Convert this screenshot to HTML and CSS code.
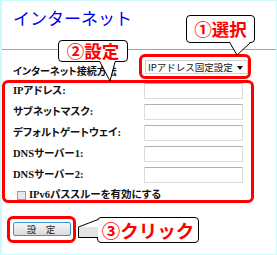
FILE: index.html
```html
<!DOCTYPE html>
<html lang="ja">
<head>
<meta charset="utf-8">
<link rel="stylesheet" href="styles.css">
</head>
<body>
<div class="frame">
  <h1 class="title">インターネット</h1>
  <div class="rule"></div>
  <div class="method-row">
    <span class="method-label">インターネット接続方法</span>
    <span class="hl-select">
      <span class="select">IPアドレス固定設定<span class="arrow"></span></span>
    </span>
  </div>
  <div class="main-box">
    <div class="field"><span class="label">IPアドレス:</span><span class="input"></span></div>
    <div class="field"><span class="label">サブネットマスク:</span><span class="input"></span></div>
    <div class="field"><span class="label">デフォルトゲートウェイ:</span><span class="input"></span></div>
    <div class="field"><span class="label">DNSサーバー1:</span><span class="input"></span></div>
    <div class="field"><span class="label">DNSサーバー2:</span><span class="input"></span></div>
    <div class="check-row"><span class="checkbox"></span><span class="label">IPv6パススルーを有効にする</span></div>
  </div>
  <div class="btn-wrap"><span class="button">設　定</span></div>

  <div class="callout c1">①選択</div>
  <svg class="tail t1" width="26" height="16" viewBox="0 0 26 16"><polygon points="2,0 22,0 9,13" fill="#fff"/><polyline points="2,1 9,13 22,1" fill="none" stroke="#000" stroke-width="1"/></svg>
  <div class="callout c2">②設定</div>
  <svg class="tail t2" width="20" height="22" viewBox="0 0 20 22"><polygon points="2,0 17,0 12,20" fill="#fff"/><polyline points="2,1 12,20 17,1" fill="none" stroke="#000" stroke-width="1"/></svg>
  <div class="callout c3">③クリック</div>
  <svg class="tail t3" width="24" height="24" viewBox="0 0 24 24"><polygon points="22,2 2,10 2,21 22,21" fill="#e4e4e4"/><polygon points="22,2 2,10 22,10" fill="#fff"/><polyline points="22,2.5 2.5,10 2.5,20.5 22,20.5" fill="none" stroke="#000" stroke-width="1"/></svg>
</div>
</body>
</html>
```

FILE: styles.css
```css
* { box-sizing: border-box; }
html, body { margin: 0; padding: 0; background: #fff; }
.frame {
  position: relative;
  width: 277px;
  height: 255px;
  border: 1px solid #cdfafa;
  border-left-width: 2px;
  background: #fff;
  overflow: hidden;
  font-family: "Liberation Serif", "Noto Sans CJK JP", serif;
}
.title {
  margin: 0;
  padding: 7px 0 0 11px;
  height: 27px;
  font-family: "Noto Sans CJK JP", sans-serif;
  font-weight: normal;
  font-size: 17px;
  line-height: 20px;
  color: #0000f0;
}
.rule {
  margin-top: 21px;
  height: 1px;
  background: #a4a4a4;
}
.method-row {
  display: flex;
  align-items: flex-start;
  margin-top: 4px;
  height: 25px;
}
.method-label {
  margin: 11px 0 0 11px;
  width: 126px;
  font-family: "Noto Sans CJK JP", sans-serif;
  font-weight: bold;
  font-size: 10px;
  line-height: 12px;
  font-feature-settings: "palt";
  color: #111;
}
.hl-select {
  display: block;
  border: 3px solid #f00;
  border-radius: 6px;
  padding: 3px 0 2px 3px;
  width: 112px;
  height: 25px;
}
.select {
  display: flex;
  align-items: center;
  position: relative;
  height: 14px;
  width: 103px;
  border: 1px solid #cfcfcf;
  padding-left: 2px;
  font-family: "Noto Sans CJK JP", sans-serif;
  font-size: 9.5px;
  line-height: 12px;
  color: #111;
  background: #fff;
}
.arrow {
  position: absolute;
  right: 4px;
  top: 5px;
  width: 0;
  height: 0;
  border-left: 3.5px solid transparent;
  border-right: 3.5px solid transparent;
  border-top: 4px solid #111;
}
.main-box {
  margin-top: 1px;
  width: 252px;
  height: 123px;
  border: 3px solid #f00;
  border-radius: 6px;
  padding: 0 0 0 8px;
  display: flex;
  flex-direction: column;
  gap: 5px;
}
.field {
  display: flex;
  align-items: center;
  height: 16px;
}
.label {
  font-weight: bold;
  font-size: 10.5px;
  line-height: 12px;
  font-feature-settings: "palt";
  color: #111;
}
.field .label { width: 131px; }
.input {
  display: block;
  width: 99px;
  height: 16px;
  border: 1px solid #dcdcdc;
  border-top-color: #b0b0b0;
  border-radius: 1px;
  background: #fff;
}
.check-row {
  display: flex;
  align-items: center;
  height: 12px;
  margin-top: 1px;
}
.checkbox {
  display: block;
  width: 9px;
  height: 9px;
  margin: 0 3px 0 4px;
  border: 1px solid #9a9a9a;
  background: #e8e8e8;
}
.btn-wrap {
  margin: 13px 0 0 5px;
  width: 69px;
  height: 27px;
  border: 3px solid #f00;
  border-radius: 6px;
  padding: 3px 2px 4px 3px;
}
.button {
  display: flex;
  align-items: center;
  justify-content: center;
  width: 58px;
  height: 14px;
  border: 1px solid #3a93d3;
  border-radius: 2px;
  background: linear-gradient(#f6f6f6, #dadada);
  font-family: "Noto Sans CJK JP", sans-serif;
  font-size: 9.5px;
  line-height: 12px;
  color: #222;
  padding-right: 2px;
}
.callout {
  position: absolute;
  background: #fff;
  border: 1px solid #000;
  border-radius: 4px;
  color: #f00;
  font-family: "Noto Sans CJK JP", sans-serif;
  font-weight: bold;
  font-size: 17.5px;
  display: flex;
  align-items: center;
  justify-content: center;
  line-height: 18px;
}
.c1 { left: 184px; top: 14px; width: 69px; height: 28px; }
.c2 { left: 56px; top: 39px; width: 70px; height: 22px; }
.c3 { left: 95px; top: 216px; width: 102px; height: 26px; font-size: 18.5px; }
.tail { position: absolute; display: block; }
.t1 { left: 226px; top: 41px; }
.t2 { left: 96px; top: 60px; }
.t3 { left: 74px; top: 216px; }
```
